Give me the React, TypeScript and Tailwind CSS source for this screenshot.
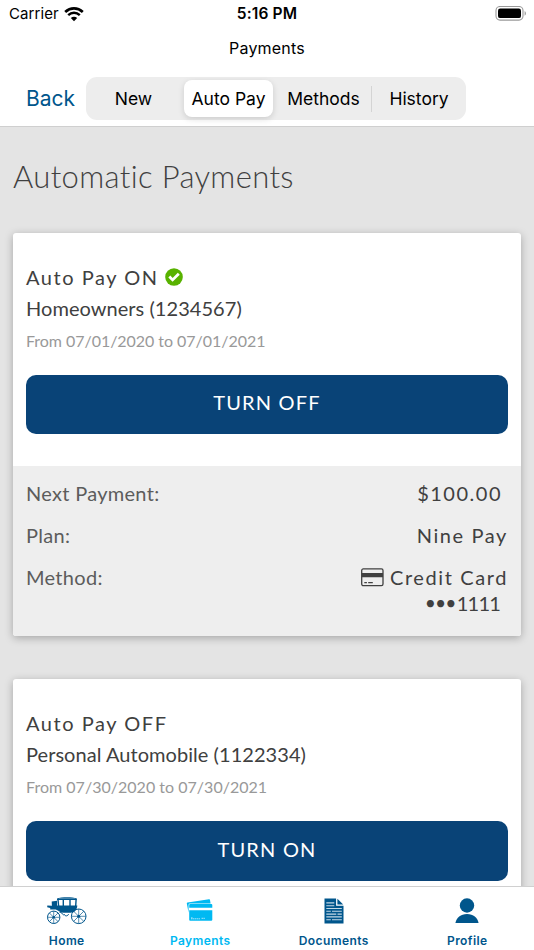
import type { ReactNode } from 'react';

interface Policy {
  status: string;
  enabled: boolean;
  name: string;
  term: string;
  termClass: string;
  action: string;
  actionClass: string;
}

const segments = [
  { label: 'New', className: 'w-[95px]' },
  { label: 'Auto Pay', className: 'w-[95px]' },
  { label: 'Methods', className: 'w-[95px]' },
  { label: 'History', className: 'w-[95px]' },
];

const policies: Policy[] = [
  {
    status: 'Auto Pay ON',
    enabled: true,
    name: 'Homeowners (1234567)',
    term: 'From 07/01/2020 to 07/01/2021',
    termClass: 'tracking-[-0.04px]',
    action: 'TURN OFF',
    actionClass: 'h-[59px] pb-[5px]',
  },
  {
    status: 'Auto Pay OFF',
    enabled: false,
    name: 'Personal Automobile (1122334)',
    term: 'From 07/30/2020 to 07/30/2021',
    termClass: 'tracking-[0.02px]',
    action: 'TURN ON',
    actionClass: 'h-[60px] pb-[5px]',
  },
];

function WifiIcon() {
  return (
    <svg width="20" height="15" viewBox="0 0 20 15" fill="none">
      <path d="M1.2 4.9C6.3.2 13.7.2 18.8 4.9" stroke="#000" strokeWidth="2.7" />
      <path d="M4.2 8.1c3.4-3 8.2-3 11.6 0" stroke="#000" strokeWidth="2.5" />
      <path d="M6.8 10.9c1.9-1.6 4.5-1.6 6.4 0L10 14.2z" fill="#000" />
    </svg>
  );
}

function BatteryIcon() {
  return (
    <svg width="32" height="16" viewBox="0 0 32 16">
      <rect x="1" y="0.5" width="27" height="13.6" rx="4" fill="none" stroke="#999" strokeWidth="1.1" />
      <rect x="3" y="2.5" width="23" height="9.6" rx="2.2" fill="#000" />
      <path d="M29.6 4.9c1.8.8 1.8 4 0 4.8z" fill="#999" />
    </svg>
  );
}

function CheckIcon() {
  return (
    <svg width="18" height="18" viewBox="0 0 18 18">
      <circle cx="9" cy="9" r="8.8" fill="#58b200" />
      <path d="M4.3 8.6l3.3 3.3 6.2-6.1" fill="none" stroke="#fff" strokeWidth="2.8" />
    </svg>
  );
}

function CardIcon() {
  return (
    <svg width="23" height="19" viewBox="0 0 23 19">
      <rect x=".7" y=".9" width="21.3" height="16.8" rx="1.6" fill="none" stroke="#404040" strokeWidth="1.3" />
      <path d="M.7 5H22v4.2H.7zM3.3 13.9h2.6v1.3H3.3zM7.2 13.9h4.6v1.3H7.2z" fill="#404040" />
    </svg>
  );
}

function CarriageIcon() {
  const spokes = [0, 45, 90, 135];
  return (
    <svg width="42" height="30" viewBox="0 0 42 30" fill="none" stroke="#00568c">
      <g strokeWidth="1">
        <circle cx="7.7" cy="21.3" r="6.2" />
        <circle cx="32.7" cy="20.3" r="7.3" />
      </g>
      <g strokeWidth=".65">
        {spokes.map((a) => (
          <path key={a} d="M1.5 21.3h12.4" transform={`rotate(${a} 7.7 21.3)`} />
        ))}
        {spokes.map((a) => (
          <path key={a} d="M25.4 20.3H40" transform={`rotate(${a} 32.7 20.3)`} />
        ))}
      </g>
      <g fill="#00568c" stroke="none">
        <circle cx="7.7" cy="21.3" r="1.3" />
        <circle cx="32.7" cy="20.3" r="1.5" />
        <path d="M5.7 5.4L11 4.8v4.7h20.3c-.3 4.6-2.8 7.2-6.5 7.2h-7.2c-3.3 0-5-2.4-7.8-3.3H4.2v-1.3l-3-.8.1-1.7 4.6.2z" />
        <path d="M11 2.6C15.5.9 26.5.9 30.9 2.6v1.3H11z" />
      </g>
      <path d="M12 3.5l.6 6.5M17.3 3.5V10M24 3.5V10M30.1 3.5L29.7 10" strokeWidth="1.4" />
      <path d="M13 2.4h16" stroke="#9dbfd3" strokeWidth=".5" />
      <path d="M13.5 16.2c2 .2 3 1.3 4.2 3.2M18.2 18c.4 2.5 3.9 2.5 4.3 0" strokeWidth="1" />
    </svg>
  );
}

function PaymentsIcon() {
  return (
    <svg width="28" height="24" viewBox="0 0 28 24">
      <path d="M.8 4.6q-.1-.9.8-1L23 .2q.9-.2 1 .7l.6 3.5H4q-1.4 0-1.4 1.4v8z" fill="#00b9f2" />
      <path d="M4.2 5.1h21q1.1 0 1.1 1v2.6H3.2V6.1q0-1 1-1zM3.2 11.2h23.1v9.6q0 1-1.1 1h-21q-1 0-1-1z" fill="#00b9f2" />
      <path d="M5 19.8h9M5 18.9h2M15.5 19.3h3.5" stroke="#b9e9fa" strokeWidth=".9" strokeDasharray="1.5 .4" />
    </svg>
  );
}

function DocumentIcon() {
  return (
    <svg width="20" height="26" viewBox="0 0 20 26">
      <path d="M.5.5h11.6v7.2h7.4v17.8H.5z" fill="#00568c" />
      <path d="M13.4.8v5.7h5.8z" fill="#00568c" />
      <path
        d="M2.3 4.9h8M2.3 7.7h8M2.3 10.5h15.5M2.3 13.3h4.5M8 13.3h9.8M2.3 16.1h10M13.5 16.1h4.3M2.3 18.9h15.5M2.3 21.7h4.5M8 21.7h9.8"
        stroke="#c2d8e5"
        strokeWidth="1.1"
      />
    </svg>
  );
}

function ProfileIcon() {
  return (
    <svg width="24" height="26" viewBox="0 0 24 26" fill="#00568c">
      <circle cx="12" cy="7.5" r="7.2" />
      <path d="M.4 25C1.6 19.5 5.5 16 12 16s10.4 3.5 11.6 9z" />
    </svg>
  );
}

function Header() {
  return (
    <header className="h-[127px] shrink-0 border-b border-[#cfcfcf] bg-white text-black">
      <div className="grid h-7 grid-cols-3 items-center px-[7px]">
        <div className="flex items-center gap-[5px] pl-0.5">
          <span className="text-[15px] leading-5 tracking-[0.1px]">Carrier</span>
          <WifiIcon />
        </div>
        <span className="text-center text-[15.5px] font-semibold tracking-[0.15px]">5:16 PM</span>
        <div className="flex justify-end">
          <BatteryIcon />
        </div>
      </div>
      <h1 className="mt-2 text-center text-[16px] leading-[24px] tracking-[0.2px]">Payments</h1>
      <div className="mt-[17px] flex items-center">
        <button className="w-[86px] pl-[26px] text-left text-[21px] text-[#00568c]">Back</button>
        <nav className="flex h-[43px] w-[380px] items-center rounded-[11px] bg-[#ededed] text-[17.5px]">
          {segments.map(({ label, className }) => (
            <div
              key={label}
              className={`${className} flex h-[26px] items-center justify-center ${
                label === 'History' ? 'border-l border-[#d4d4d4]' : ''
              }`}
            >
              {label === 'Auto Pay' ? (
                <span className="flex h-[37px] w-[89px] shrink-0 items-center justify-center rounded-lg bg-white pt-px shadow-[0_2px_6px_rgba(0,0,0,0.14)]">
                  {label}
                </span>
              ) : (
                <span className="pt-px">{label}</span>
              )}
            </div>
          ))}
        </nav>
      </div>
    </header>
  );
}

function DetailRow({ label, children }: { label: string; children: ReactNode }) {
  return (
    <div className="flex justify-between text-[20px] leading-[26px]">
      <span className="tracking-[0.3px] text-[#5c5c5c]">{label}</span>
      <div className="text-right tracking-[1.6px] text-[#404040]">{children}</div>
    </div>
  );
}

function PolicyCard({ policy, children }: { policy: Policy; children?: ReactNode }) {
  return (
    <section className="overflow-hidden rounded-[3px] bg-white shadow-[0_2px_9px_rgba(0,0,0,0.28)]">
      <div className="px-[13px] pb-8 pt-7 text-[#404040]">
        <div className="flex h-[31px] items-center gap-[6px]">
          <span className="pt-px text-[20px] leading-[31px] tracking-[1.55px]">{policy.status}</span>
          {policy.enabled && <CheckIcon />}
        </div>
        <p className="text-[20px] leading-[32px] tracking-[0.05px]">{policy.name}</p>
        <p className={`${policy.termClass} text-[16px] leading-[33px] text-[#999]`}>{policy.term}</p>
        <button
          className={`${policy.actionClass} mt-[18px] flex w-full items-center justify-center rounded-[10px] bg-[#094377] text-[20px] tracking-[1.2px] text-white`}
        >
          {policy.action}
        </button>
      </div>
      {children}
    </section>
  );
}

const tabs = [
  { label: 'Home', icon: <CarriageIcon />, className: 'text-[#00568c]' },
  { label: 'Payments', icon: <PaymentsIcon />, className: 'text-[#00b9f2]' },
  { label: 'Documents', icon: <DocumentIcon />, className: 'text-[#00568c]' },
  { label: 'Profile', icon: <ProfileIcon />, className: 'text-[#00568c]' },
];

export default function App() {
  return (
    <div className="flex h-[950px] w-[534px] flex-col overflow-hidden bg-white font-['Inter',sans-serif]">
      <Header />
      <main className="min-h-0 flex-1 overflow-hidden bg-[#e4e4e4] px-[13px] font-['Lato',sans-serif]">
        <h2 className="mt-[29px] h-[77px] text-[31px] font-light leading-[40px] tracking-[0.35px] text-[#404040]">
          Automatic Payments
        </h2>
        <div className="flex flex-col gap-[43px]">
          <PolicyCard policy={policies[0]}>
            <div className="flex flex-col gap-4 bg-[#eee] px-[13px] pb-5 pt-[14px]">
              <DetailRow label="Next Payment:">
                <span className="pr-[6px] tracking-[1.5px]">$100.00</span>
              </DetailRow>
              <DetailRow label="Plan:">Nine Pay</DetailRow>
              <DetailRow label="Method:">
                <div className="flex items-center justify-end gap-[6px]">
                  <CardIcon />
                  Credit Card
                </div>
                <div className="flex items-center justify-end pr-2 tracking-[-0.8px]">
                  <span className="text-[14.5px] tracking-[1.6px]">●●●</span>
                  1111
                </div>
              </DetailRow>
            </div>
          </PolicyCard>
          <PolicyCard policy={policies[1]} />
        </div>
      </main>
      <footer className="grid h-16 shrink-0 grid-cols-4 border-t border-[#d0d0d0] bg-white">
        {tabs.map(({ label, icon, className }) => (
          <div key={label} className={`${className} flex flex-col items-center`}>
            <div className="flex h-[45px] items-center pt-[3px]">{icon}</div>
            <span className="text-[12px] font-semibold leading-[17px] tracking-[0.4px]">{label}</span>
          </div>
        ))}
      </footer>
    </div>
  );
}
